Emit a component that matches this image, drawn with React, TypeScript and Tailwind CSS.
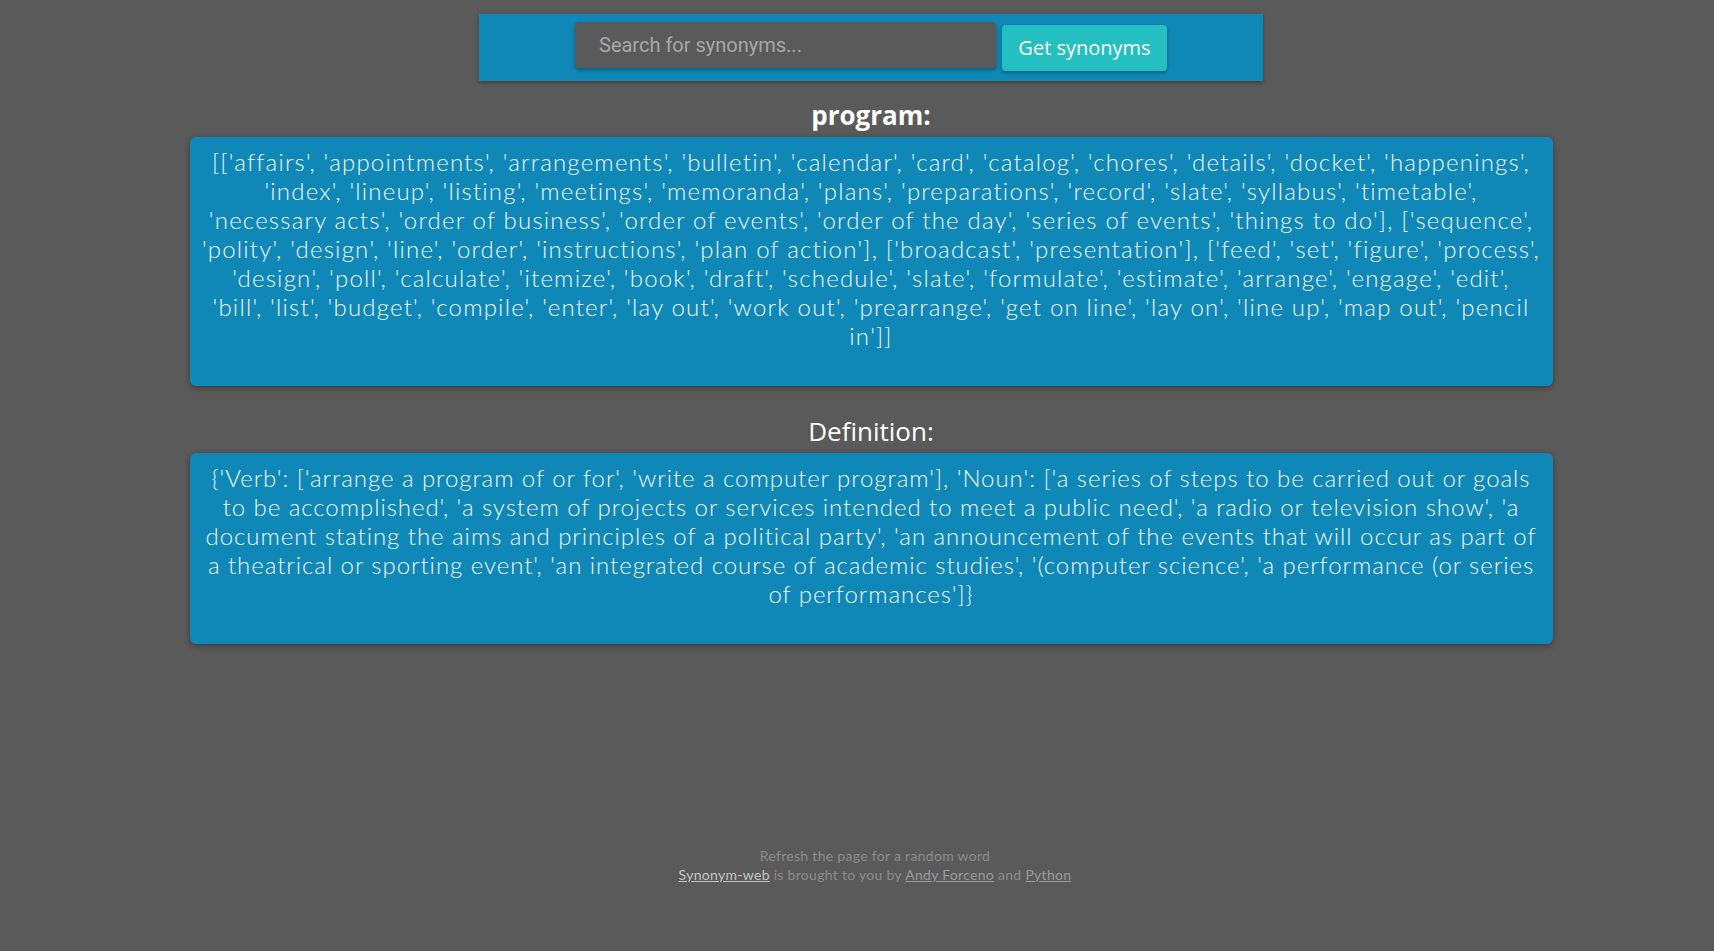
import React from 'react';

const synonymLines = [
  "[['affairs', 'appointments', 'arrangements', 'bulletin', 'calendar', 'card', 'catalog', 'chores', 'details', 'docket', 'happenings',",
  "'index', 'lineup', 'listing', 'meetings', 'memoranda', 'plans', 'preparations', 'record', 'slate', 'syllabus', 'timetable',",
  "'necessary acts', 'order of business', 'order of events', 'order of the day', 'series of events', 'things to do'], ['sequence',",
  "'polity', 'design', 'line', 'order', 'instructions', 'plan of action'], ['broadcast', 'presentation'], ['feed', 'set', 'figure', 'process',",
  "'design', 'poll', 'calculate', 'itemize', 'book', 'draft', 'schedule', 'slate', 'formulate', 'estimate', 'arrange', 'engage', 'edit',",
  "'bill', 'list', 'budget', 'compile', 'enter', 'lay out', 'work out', 'prearrange', 'get on line', 'lay on', 'line up', 'map out', 'pencil",
  "in']]",
];

const definitionLines = [
  "{'Verb': ['arrange a program of or for', 'write a computer program'], 'Noun': ['a series of steps to be carried out or goals",
  "to be accomplished', 'a system of projects or services intended to meet a public need', 'a radio or television show', 'a",
  "document stating the aims and principles of a political party', 'an announcement of the events that will occur as part of",
  "a theatrical or sporting event', 'an integrated course of academic studies', '(computer science', 'a performance (or series",
  "of performances']}",
];

const ResultCard: React.FC<{ lines: string[]; tracking: string }> = ({ lines, tracking }) => (
  <div className="w-[1363px] mx-auto bg-[#1088b7] rounded-md shadow-[0_2px_6px_rgba(0,0,0,0.35)] pt-[10px] pb-[36px] px-[6px]">
    <p className={`text-center text-[#eef6fa] text-[24px] leading-[29px] font-light whitespace-nowrap font-['Lato',sans-serif] ${tracking}`}>
      {lines.map((line, i) => (
        <React.Fragment key={i}>
          {i > 0 && <br />}
          {line}
        </React.Fragment>
      ))}
    </p>
  </div>
);

export default function App() {
  return (
    <div className="min-h-screen bg-[#5a5a5a] pl-[28px] pt-[14px] pb-[40px] font-['Open_Sans',sans-serif]">
      {/* Search bar */}
      <div className="w-[784px] h-[67px] mx-auto bg-[#1088b7] shadow-[0_2px_4px_rgba(0,0,0,0.3)] flex justify-center items-start gap-[6px] pt-[8px]">
        <input
          type="text"
          placeholder="Search for synonyms..."
          className="w-[421px] h-[46px] bg-[#5a5a5a] rounded-[4px] shadow-[0_2px_4px_rgba(0,0,0,0.35)] px-[24px] text-[20px] text-white placeholder:text-[#a8a8a8] font-['Roboto',sans-serif] outline-none"
        />
        <button className="mt-[3px] w-[165px] h-[46px] bg-[#23bfc1] rounded-[4px] shadow-[0_2px_4px_rgba(0,0,0,0.3)] text-white text-[20px] font-normal">
          Get synonyms
        </button>
      </div>

      <h2 className="text-center text-white text-[26px] font-bold leading-[32px] mt-[18px] mb-[6px]">
        program:
      </h2>
      <ResultCard lines={synonymLines} tracking="tracking-[1.2px]" />

      <h2 className="text-center text-white text-[26px] leading-[32px] mt-[29px] mb-[6px]">
        Definition:
      </h2>
      <ResultCard lines={definitionLines} tracking="tracking-[0.95px]" />

      {/* Footer */}
      <footer className="mt-[202px] pl-[8px] text-center text-[14px] leading-[19px] text-[#8c8c8c] font-['Lato',sans-serif] tracking-[0.3px]">
        <p>Refresh the page for a random word</p>
        <p>
          <a href="#" className="underline text-[#c4c4c4]">Synonym-web</a> is brought to you by{' '}
          <a href="#" className="underline text-[#9a9a9a]">Andy Forceno</a> and{' '}
          <a href="#" className="underline text-[#9a9a9a]">Python</a>
        </p>
      </footer>
    </div>
  );
}
